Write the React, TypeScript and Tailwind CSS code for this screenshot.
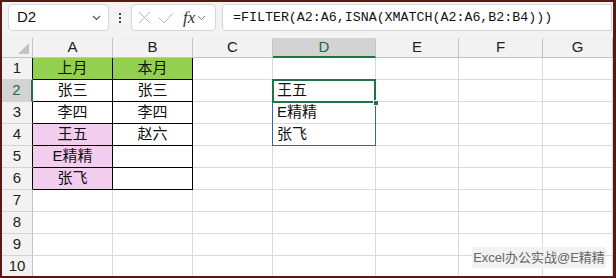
import React from 'react';

const cols = ['A', 'B', 'C', 'D', 'E', 'F', 'G'];
const colA = ['上月', '张三', '李四', '王五', 'E精精', '张飞'];
const colB = ['本月', '张三', '李四', '赵六', '', ''];
const colD: Record<number, string> = { 2: '王五', 3: 'E精精', 4: '张飞' };

const font = { fontFamily: '"Liberation Sans", "Noto Sans CJK SC", sans-serif' };

function Cell({ row, col }: { row: number; col: string }) {
  let text = '';
  let bg = 'bg-white';
  let border = 'border-r border-b border-[#dadada]';
  let align = 'justify-center';
  if (col === 'A' && row <= 6) {
    text = colA[row - 1];
    bg = row === 1 ? 'bg-[#92d050]' : row >= 4 ? 'bg-[#f2cdee]' : 'bg-white';
    border = 'border-r border-b border-black';
  }
  if (col === 'B' && row <= 6) {
    text = colB[row - 1];
    bg = row === 1 ? 'bg-[#92d050]' : 'bg-white';
    border = 'border-r border-b border-black';
  }
  if (col === 'D' && colD[row]) {
    text = colD[row];
    align = 'justify-start pl-[4px]';
  }
  return (
    <div className={`flex items-center ${align} ${bg} ${border} text-[15px] text-[#111]`}>
      {text}
    </div>
  );
}

export default function App() {
  const rows = Array.from({ length: 10 }, (_, i) => i + 1);
  return (
    <div className="w-[616px] h-[278px] bg-[#561a12] pl-[2px] pt-[2px] pr-[3px] pb-[2px] overflow-hidden" style={font}>
      <div className="h-full bg-white flex flex-col overflow-hidden">
        {/* formula bar */}
        <div className="h-[36px] shrink-0 bg-[#f3f3f3] flex items-start pt-[2px] pl-[6px] pr-[1px]">
          <div className="w-[101px] h-[27px] bg-white border border-[#d6d6d6] rounded-[4px] flex items-center justify-between pl-[8px] pr-[7px]">
            <span className="text-[15px] text-[#111]">D2</span>
            <svg width="9" height="6" viewBox="0 0 9 6">
              <path d="M1 1 L4.5 4.5 L8 1" fill="none" stroke="#555" strokeWidth="1.1" />
            </svg>
          </div>
          <div className="w-[22px] h-[27px] flex flex-col items-center justify-center gap-[2px]">
            <span className="w-[2px] h-[2px] bg-[#444]" />
            <span className="w-[2px] h-[2px] bg-[#444]" />
            <span className="w-[2px] h-[2px] bg-[#444]" />
          </div>
          <div className="w-[85px] h-[27px] bg-white border border-[#d6d6d6] rounded-[4px] flex items-center pl-[6px] gap-[7px]">
            <svg width="13" height="13" viewBox="0 0 13 13">
              <path d="M1 1 L12 12 M12 1 L1 12" stroke="#b5b5b5" strokeWidth="1" />
            </svg>
            <svg width="16" height="12" viewBox="0 0 16 12">
              <path d="M1 6 L6 11 L15 1" fill="none" stroke="#b5b5b5" strokeWidth="1" />
            </svg>
            <div className="flex items-center gap-[2px] ml-[2px]">
              <span className="italic text-[17px] text-[#333] leading-none" style={{ fontFamily: '"Liberation Serif", serif' }}>
                fx
              </span>
              <svg width="9" height="6" viewBox="0 0 9 6">
                <path d="M1 1 L4.5 4.5 L8 1" fill="none" stroke="#777" strokeWidth="1" />
              </svg>
            </div>
          </div>
          <div className="ml-[6px] flex-1 h-[27px] bg-white border border-[#d6d6d6] rounded-l-[4px] flex items-center pl-[10px]">
            <span className="text-[13.3px] text-[#111]" style={{ fontFamily: '"Liberation Mono", monospace' }}>
              =FILTER(A2:A6,ISNA(XMATCH(A2:A6,B2:B4)))
            </span>
          </div>
        </div>

        {/* grid */}
        <div className="relative flex-1">
          <div className="grid grid-cols-[31px_80px_80px_80px_103px_83px_84px_1fr] grid-rows-[20px_repeat(10,22px)]">
            <div className="bg-[#f2f2f2] border-r border-b border-[#c4c4c4] flex items-end justify-end pr-[3px] pb-[3px]">
              <svg width="11" height="11" viewBox="0 0 11 11">
                <path d="M11 0 L11 11 L0 11 Z" fill="#c2c2c2" />
              </svg>
            </div>
            {cols.map((c) => (
              <div
                key={c}
                className={`flex items-center justify-center text-[15px] ${
                  c === 'D'
                    ? 'bg-[#d3d3d3] text-[#1e6b41] border-b-2 border-b-[#217346] border-r border-r-[#c4c4c4]'
                    : 'bg-[#f2f2f2] text-[#222] border-r border-b border-[#c4c4c4]'
                }`}
              >
                {c}
              </div>
            ))}
            {rows.map((r) => (
              <React.Fragment key={r}>
                <div
                  className={`flex items-center justify-center text-[15px] border-b border-b-[#d4d4d4] ${
                    r === 2
                      ? 'bg-[#d3d3d3] text-[#1e6b41] border-r-2 border-r-[#217346]'
                      : r <= 6
                      ? 'bg-[#f2f2f2] text-[#222] border-r border-r-black'
                      : 'bg-[#f2f2f2] text-[#222] border-r border-r-[#c4c4c4]'
                  }`}
                >
                  {r}
                </div>
                {cols.map((c) => (
                  <Cell key={c} row={r} col={c} />
                ))}
              </React.Fragment>
            ))}
          </div>

          {/* spill range */}
          <div className="absolute left-[270px] top-[41px] w-[104px] h-[67px] border border-[#2f64b0] pointer-events-none" />
          {/* active cell */}
          <div className="absolute left-[270px] top-[41px] w-[104px] h-[24px] border-2 border-[#217346] pointer-events-none" />
          <div className="absolute left-[371px] top-[62px] w-[6px] h-[6px] bg-[#217346] border border-white pointer-events-none" />

          {/* watermark */}
          <div className="absolute left-[470px] top-[209px] w-[134px] h-[21px] bg-[#f1f1f1]/90 flex items-center justify-center text-[13px] text-[#666]">
            Excel办公实战@E精精
          </div>
        </div>
      </div>
    </div>
  );
}
